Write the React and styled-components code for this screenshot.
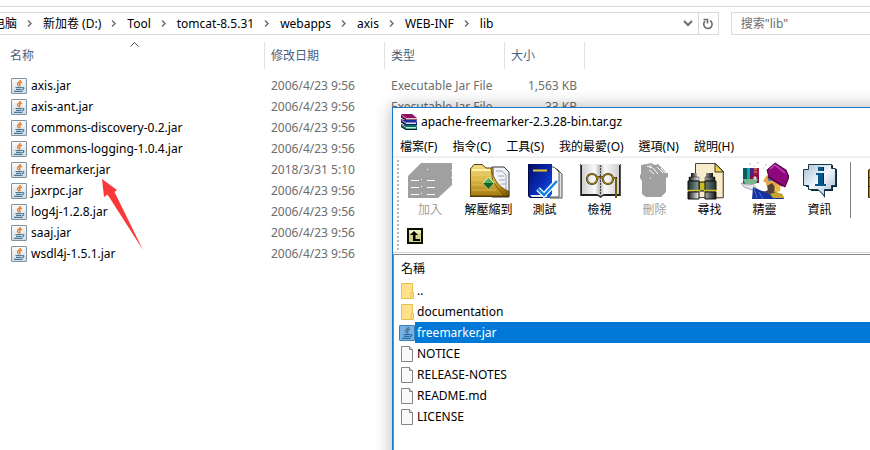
import React from "react";
import styled, { createGlobalStyle } from "styled-components";

const GlobalStyle = createGlobalStyle`
  * { box-sizing: border-box; }
  body {
    margin: 0;
    background: #fff;
    color: #000;
    font: 12px/20px "Noto Sans", "Noto Sans CJK SC", sans-serif;
    overflow: hidden;
  }
  button, input { font: inherit; color: inherit; }
  svg { display: block; flex: none; }
`;

/* ---------- Explorer ---------- */

const Desktop = styled.div`
  position: relative;
  min-height: 100vh;
  overflow: hidden;
`;

const TopStrip = styled.div`
  height: 7px;
  border-bottom: 1px solid #d9d9d9;
`;

const NavRow = styled.div`
  display: flex;
  gap: 12px;
  padding: 5px 0 7px;
`;

const AddressBar = styled.nav`
  flex: 1;
  min-width: 0;
  display: flex;
  height: 23px;
  border: 1px solid #d9d9d9;
  border-left: 0;
`;

const Crumbs = styled.ol`
  flex: 1;
  display: flex;
  margin: 0;
  padding: 0;
  list-style: none;
  overflow: hidden;
`;

const Crumb = styled.li`
  display: flex;
  align-items: center;
  white-space: nowrap;

  &:first-child {
    width: 43px;
    justify-content: flex-end;
  }
`;

const CrumbLink = styled.a`
  color: #000;
  text-decoration: none;
`;

const BarButton = styled.button`
  display: grid;
  place-items: center;
  width: 20px;
  padding: 0;
  border: 0;
  border-left: ${(p) => (p.$divided ? "1px solid #d9d9d9" : "0")};
  background: none;
`;

const SearchBox = styled.input`
  width: 16%;
  height: 23px;
  padding: 0 9px;
  border: 1px solid #d9d9d9;
  border-right: 0;
  border-radius: 0;
  outline: 0;
  &::placeholder { color: #6d6d6d; opacity: 1; }
`;

const FileTable = styled.table`
  border-collapse: collapse;
  table-layout: fixed;
  width: 585px;
`;

const Col = styled.col`
  width: ${(p) => p.$w}px;
`;

const HeadCell = styled.th`
  position: relative;
  padding: 0 0 6px;
  font-weight: 400;
  text-align: left;
  color: #4c607a;
`;

const HeadLabel = styled.div`
  height: 27px;
  line-height: 27px;
  padding-left: ${(p) => (p.$first ? 10 : 6)}px;
  border-right: 1px solid #e2e2e2;
`;

const SortMark = styled.svg`
  position: absolute;
  top: 0;
  left: 49%;
`;

const Cell = styled.td`
  height: 21px;
  padding: 0 8px 0 6px;
  color: #6d6d6d;
  text-align: ${(p) => (p.$right ? "right" : "left")};
  white-space: nowrap;
`;

const NameCell = styled(Cell)`
  padding: 0 0 0 11px;
  color: #000;
`;

const NameBox = styled.div`
  display: flex;
  align-items: center;
  gap: 4px;
`;

const PointerArrow = styled.svg`
  position: absolute;
  left: 100px;
  top: 178px;
`;

/* ---------- Archive window ---------- */

const ArchiveWindow = styled.section`
  position: absolute;
  left: 392px;
  top: 107px;
  right: 0;
  bottom: 0;
  display: flex;
  flex-direction: column;
  overflow: hidden;
  background: #fff;
  border: solid #1979ca;
  border-width: 1px 0 0 1px;
  font-family: "Noto Sans", "Noto Sans CJK TC", sans-serif;
`;

const WindowShadow = styled.div`
  position: absolute;
  left: 392px;
  top: 107px;
  right: -20px;
  bottom: -20px;
  box-shadow: 0 0 16px rgba(0, 0, 0, 0.3);
`;

const TitleBar = styled.header`
  display: flex;
  align-items: center;
  gap: 4px;
  height: 28px;
  padding-left: 8px;
`;

const MenuBar = styled.div`
  display: flex;
  align-items: flex-end;
  gap: 15px;
  height: 22px;
  padding-left: 7px;
  border-bottom: 2px solid #f0f0f0;
`;

const MenuItem = styled.button`
  padding: 0;
  border: 0;
  background: none;
  line-height: 18px;
  white-space: nowrap;
`;

const ToolArea = styled.div`
  display: flex;
  height: 95px;
  padding: 2px 0 0 4px;
  border-bottom: 1px solid #d4d4d4;
`;

const Grip = styled.div`
  width: 2px;
  background: repeating-linear-gradient(#b8b8b8 0 2px, #fff 2px 4px);
`;

const ToolRows = styled.div`
  flex: 1;
  min-width: 0;
`;

const ToolRow = styled.div`
  display: flex;
  height: 66px;
  padding-left: 1px;
`;

const ToolButton = styled.button`
  flex: none;
  display: flex;
  flex-direction: column;
  align-items: ${(p) => (p.$start ? "flex-start" : "center")};
  width: ${(p) => p.$w || 55}px;
  padding: 2px 0 0;
  border: 0;
  background: none;
  line-height: 20px;
  white-space: nowrap;
  color: ${(p) => (p.disabled ? "#a0a0a0" : "#000")};
`;

const ToolDivider = styled.div`
  flex: none;
  width: 1px;
  height: 56px;
  margin: 2px 17px 0 3px;
  background: #808080;
`;

const UpButton = styled.button`
  display: block;
  margin-left: 8px;
  padding: 2px 0 0;
  border: 0;
  background: none;
`;

const Listing = styled.div`
  flex: 1;
  margin-top: 1px;
  padding-top: 3px;
  border: solid #828790;
  border-width: 1px 0 0 1px;
`;

const ArchiveTable = styled.table`
  width: 100%;
  border-collapse: collapse;
`;

const ArchiveHead = styled.th`
  height: 22px;
  padding: 0 0 0 7px;
  font-weight: 400;
  text-align: left;
`;

const ArchiveCell = styled.td`
  height: 21px;
  padding: 0 0 0 5px;
`;

const Entry = styled.div`
  display: flex;
  align-items: center;
`;

const EntryIcon = styled.span`
  display: flex;
  justify-content: center;
  width: 16px;
`;

const EntryName = styled.span`
  flex: 1;
  height: 21px;
  line-height: 21px;
  padding-left: 2px;
  color: ${(p) => (p.$selected ? "#fff" : "#000")};
  background: ${(p) => (p.$selected ? "#0078d7" : "transparent")};
`;

/* ---------- Small icons ---------- */

const Chevron = () => (
  <svg width="26" height="9" viewBox="0 0 26 9" fill="none" stroke="#6b6b6b" strokeWidth="1.4">
    <path d="M11 1.500l3 3-3 3" />
  </svg>
);

const JarIcon = ({ selected }) => (
  <svg width="16" height="16" viewBox="0 0 16 16">
    <defs>
      <linearGradient id="jarPaper" x2="0" y2="1">
        <stop offset="0" stopColor="#fbfcfd" />
        <stop offset="1" stopColor="#cfdce5" />
      </linearGradient>
    </defs>
    <rect x=".5" y=".5" width="15" height="15" rx=".5" fill={selected ? "#76b1e2" : "url(#jarPaper)"} stroke={selected ? "#397fb8" : "#7f93a2"} />
    <path d="M9.500 2c.3 1.800-3.500 2.500-3 4.300.2.700 1 1 1.300 1.900M11 4.200c-1.900.6-3 1.500-2.200 2.500.5.700.2 1.100-.4 1.700" fill="none" stroke={selected ? "#4a7294" : "#e87a28"} strokeWidth="1.300" />
    <path d="M4.500 9.500h6.500M5 11.300h5.500M3 13.300h8.500M11.300 9.500c2.200-.3 2 1.700-.2 2.300" fill="none" stroke={selected ? "#286ca5" : "#4a7796"} strokeWidth="1.200" />
  </svg>
);

const FolderIcon = () => (
  <svg width="13" height="16" viewBox="0 0 13 16">
    <path d="M.5.500h11v9h1v6H.500z" fill="#ffe28b" stroke="#e8bf4c" />
    <path d="M10 15V9.500h1.500" fill="none" stroke="#e8bf4c" />
  </svg>
);

const PageIcon = () => (
  <svg width="12" height="16" viewBox="0 0 12 16">
    <path d="M.5.500h8l3 3v12H.500z" fill="#f7f9fa" stroke="#858585" />
    <path d="M8.500.500v3h3" fill="#ddd" stroke="#858585" />
  </svg>
);

const RarIcon = () => (
  <svg width="16" height="16" viewBox="0 0 16 16">
    <path d="M0 1l1-1h10l5 4v2H5L0 3z" fill="#8f1260" />
    <path d="M5 4h11v2H5z" fill="#e8c9da" />
    <path d="M0 3l5 3h11" fill="none" stroke="#2a0014" />
    <path d="M0 5l4 1h11l1 2v3H5L0 8z" fill="#1b2c9e" />
    <path d="M5 8.500h10v1.500H5z" fill="#d4dcf6" />
    <path d="M0 8l5 3h11" fill="none" stroke="#050a30" />
    <path d="M0 10l4 1h11l1 2v3H5l-5-3z" fill="#0a6f62" />
    <path d="M5 13h10v1.500H5z" fill="#b7efe2" />
    <path d="M0 12.500l5 3h11" fill="none" stroke="#02251f" />
    <path d="M1 1.500l4 2.500M1 6.500L5 9M1 11l4 2.500" stroke="#e58aa8" />
  </svg>
);

/* ---------- Toolbar icons ---------- */

const ToolSvg = ({ children }) => (
  <svg width="48" height="38" viewBox="0 0 48 38">{children}</svg>
);

const AddIcon = () => (
  <ToolSvg>
    <path d="M2 14L15 1h31v22L32 36H2z" fill="#a0a0a0" />
    <path d="M5 18.500h8m8 0h8M5 25.500h8m8 0h8M5 32.500h8m8 0h8M15 17.500h1M15 24.500h1M15 31.500h1M21 7.500h1M45 8.500h1M45 15.500h1" stroke="#fff" />
  </ToolSvg>
);

const ExtractIcon = () => (
  <ToolSvg>
    <defs>
      <linearGradient id="gold" x2="0" y2="1">
        <stop offset="0" stopColor="#f4df83" />
        <stop offset=".5" stopColor="#d9b442" />
        <stop offset="1" stopColor="#a47a12" />
      </linearGradient>
      <linearGradient id="goldFold" x2="1" y2="1">
        <stop offset="0" stopColor="#fff0a0" />
        <stop offset=".5" stopColor="#c5941c" />
        <stop offset="1" stopColor="#6f4c04" />
      </linearGradient>
    </defs>
    <path d="M27 5h12l5 5v25H27z" fill="#f1f3f8" stroke="#30343c" />
    <path d="M31 9h6l4 4v20M33 14h6M34 18h6M36 22h5" fill="none" stroke="#9ba3b4" />
    <path d="M5.500 7L9 2.500h8L21 6h7v8l11 20H5.500z" fill="url(#gold)" stroke="#5b4206" />
    <path d="M7 8h20" stroke="#fff2ab" strokeWidth="2" />
    <path d="M7 13h19M7 18h12M7 23h11M7 28h24" stroke="#f3dc84" strokeOpacity=".5" />
    <path d="M26 6.500c2 10 7 18 18 23v4.500h-5L28 20z" fill="url(#goldFold)" stroke="#5b4206" strokeWidth=".7" />
    <path d="M5 34.500h39" stroke="#4f3702" />
    <path d="M23.500 15l5.500 6-5.500 6-5.500-6z" fill="#4fae60" stroke="#fff4c0" />
    <path d="M18 21h11l-5.500 6z" fill="#116327" />
  </ToolSvg>
);

const TestIcon = () => (
  <ToolSvg>
    <defs>
      <linearGradient id="bookBlue" x2="1" y2="1">
        <stop offset="0" stopColor="#000c60" />
        <stop offset=".6" stopColor="#0b2fbd" />
        <stop offset="1" stopColor="#0666e8" />
      </linearGradient>
    </defs>
    <path d="M29 7h7l5 5v24H29z" fill="#dfe3e8" stroke="#555" />
    <path d="M27 5h6l5 5v25H27z" fill="#fff" stroke="#555" />
    <path d="M7 2h24v30l-3 4H9l-2-2z" fill="url(#bookBlue)" />
    <path d="M7.500 2v32l2 1.500H24" fill="none" stroke="#000748" />
    <path d="M9 33h17v2H11z" fill="#e8edf5" />
    <path d="M12 8.500h14" stroke="#e3c62c" strokeWidth="2" />
    <path d="M17 27l6 6 13-14" fill="none" stroke="#fff" strokeWidth="5" />
    <path d="M17 27l6 6 13-14" fill="none" stroke="#1287e3" strokeWidth="2.500" />
  </ToolSvg>
);

const ViewIcon = () => (
  <ToolSvg>
    <defs>
      <linearGradient id="leaf">
        <stop offset="0" stopColor="#d0d0d0" />
        <stop offset=".35" stopColor="#f9f9f9" />
        <stop offset=".5" stopColor="#b4b4b4" />
        <stop offset=".6" stopColor="#fafafa" />
        <stop offset="1" stopColor="#cfcfcf" />
      </linearGradient>
    </defs>
    <path d="M4 3h41v31H27l-2.500 2L22 34H4z" fill="#222" />
    <path d="M6 2h16l2.500 2L27 2h16v30H28l-3.500 2-3.500-2H6z" fill="url(#leaf)" />
    <path d="M4.500 2v32M44.500 2v32" stroke="#555" />
    <path d="M24.500 3v30" stroke="#444" strokeDasharray="2 1" />
    <g fill="none" stroke="#221900" strokeWidth="2">
      <circle cx="16" cy="17" r="5" />
      <circle cx="32" cy="17" r="5" />
      <path d="M21 16q3.500-2 6 0M37 16h3v20" />
    </g>
    <g fill="none" stroke="#c59b1d">
      <circle cx="16" cy="17" r="5" />
      <circle cx="32" cy="17" r="5" />
      <path d="M21 16q3.500-2 6 0M37 16h3v20" />
    </g>
  </ToolSvg>
);

const DeleteIcon = () => (
  <ToolSvg>
    <path d="M10 3l6-1 4-1 4 2 3-1 6 6 2 3h2v4l-2 1v14l-5 5H15l-4-3V19l-2-3v-3l1-1z" fill="#a0a0a0" />
    <path d="M16 4l5 2-2-3M22 6l5 6M26 5l6 6M30 6l4 5M18 8l5 4M19 16h1" fill="none" stroke="#fff" />
  </ToolSvg>
);

const FindIcon = () => (
  <ToolSvg>
    <defs>
      <linearGradient id="tube">
        <stop offset="0" stopColor="#1c2a28" />
        <stop offset=".4" stopColor="#86a39d" />
        <stop offset="1" stopColor="#22332f" />
      </linearGradient>
      <linearGradient id="steel">
        <stop offset="0" stopColor="#111" />
        <stop offset=".4" stopColor="#fff" />
        <stop offset="1" stopColor="#111" />
      </linearGradient>
    </defs>
    <path d="M9.500 1.500h20l8 8v26h-28z" fill="#f9ecca" stroke="#444" />
    <path d="M29 1.500l8.500 8.500H29z" fill="#f5d53f" stroke="#333" />
    <path d="M37 11v25H29" fill="none" stroke="#8f8567" />
    <path d="M13 20h7v9h-7z" fill="#cdbb25" stroke="#111" />
    <path d="M5 11h6v4H5zM20 11h7v4h-7z" fill="url(#steel)" />
    <path d="M3 15h10v4H3zM19 15h10v4H19z" fill="url(#steel)" stroke="#222" strokeWidth=".5" />
    <path d="M2 19h11v10H2zM19 19h11v10H19z" fill="url(#tube)" stroke="#111" />
    <path d="M1 28.500h13M18 28.500h13" stroke="#d3c426" strokeWidth="1.500" />
    <path d="M2 30h11v7H2zM19 30h11v7H19z" fill="url(#steel)" stroke="#111" />
  </ToolSvg>
);

const WizardIcon = () => (
  <ToolSvg>
    <path d="M2 6h4v16H2z" fill="#075c60" />
    <path d="M6 6h3v16H6z" fill="#12ad9a" />
    <path d="M9 6h4v12H9z" fill="#43218c" />
    <path d="M12 6h6v7h-6z" fill="#a50f4b" />
    <path d="M9 13h9v8H9z" fill="#7c1240" />
    <path d="M2 17h15l-2 5H4z" fill="#79b78d" />
    <path d="M14 14v4m-2-2h4" stroke="#fff" />
    <path d="M13 7h3M13 10h3" stroke="#d9b744" />
    <path d="M8 2h2M16 1h2M24 3h2M13 4h1M22 6h1" stroke="#bbb" />
    <path d="M0 21l7 2 5-1 4 5-5 1-8-3z" fill="#e6e6ed" stroke="#81818d" strokeWidth=".7" />
    <path d="M12 25l9 4 8 1 12 2 2 5H11z" fill="#16339d" />
    <path d="M13 26l3 10M18 30l4 7" stroke="#466be0" />
    <path d="M26 13l14 6-1 10-8 2-5-3 2-3-3-2v-2l-3-2z" fill="#e5a54a" />
    <path d="M26 24l5-3 3 4-1 5 7 2-9 1-8-3 4-2z" fill="#53443b" />
    <path d="M29 32l7-2 6 3 1 3H32z" fill="#c4a42c" />
    <path d="M26 8l8-7 11 7 3 7-4 10-16-10z" fill="#8c087c" stroke="#45003e" />
    <path d="M29 7l5-4 10 8" fill="none" stroke="#c840b4" strokeWidth="1.500" />
    <path d="M27 15l15 9" stroke="#58004e" strokeWidth="2" />
    <circle cx="36" cy="26" r="2" fill="none" stroke="#f0d434" />
    <path d="M27 18h3" stroke="#1f6fc4" strokeWidth="1.500" />
  </ToolSvg>
);

const InfoIcon = () => (
  <ToolSvg>
    <defs>
      <linearGradient id="bubble" x2="1" y2="1">
        <stop offset="0" stopColor="#a9bfd1" />
        <stop offset=".5" stopColor="#f3f8fc" />
        <stop offset="1" stopColor="#9cb4c7" />
      </linearGradient>
    </defs>
    <path d="M14 3h23v4h4v18h-4v4h-8v7l-5-7h-9v-4h-5v-16h4z" fill="#0d2737" />
    <path d="M12.500 2.500h23v4h4v17h-4v4h-7V34l-6.500-6.500h-9.500v-4h-5v-16h5z" fill="url(#bubble)" stroke="#183b51" />
    <path d="M22 5h5v4h-5zM20 11h7v11h3v2H19v-2h3v-9h-2z" fill="#07578e" />
    <path d="M27.500 5v4M27.500 11v11" stroke="#00284b" />
  </ToolSvg>
);

const ArchiveBoxIcon = () => (
  <svg width="40" height="38" viewBox="0 0 40 38">
    <path d="M.5 8L3 6.500h36v29H.500z" fill="#9d8428" stroke="#3b2b04" />
    <path d="M0 15.500h38M0 24.500h38" stroke="#3b2b04" />
  </svg>
);

const UpIcon = () => (
  <svg width="16" height="16" viewBox="0 0 16 16">
    <rect x="1" y="1" width="14" height="14" fill="#d4cf8b" stroke="#0b0b00" strokeWidth="2" />
    <path d="M2 2h12v3H2z" fill="#eeebc0" />
    <path d="M7 3l4 4H8.500v4H13v2H6V7H3z" fill="#000" />
  </svg>
);

/* ---------- Data ---------- */

const crumbs = ["电脑", "新加卷 (D:)", "Tool", "tomcat-8.5.31", "webapps", "axis", "WEB-INF", "lib"];

const files = [
  ["axis.jar", "2006/4/23 9:56", "Executable Jar File", "1,563 KB"],
  ["axis-ant.jar", "2006/4/23 9:56", "Executable Jar File", "33 KB"],
  ["commons-discovery-0.2.jar", "2006/4/23 9:56"],
  ["commons-logging-1.0.4.jar", "2006/4/23 9:56"],
  ["freemarker.jar", "2018/3/31 5:10"],
  ["jaxrpc.jar", "2006/4/23 9:56"],
  ["log4j-1.2.8.jar", "2006/4/23 9:56"],
  ["saaj.jar", "2006/4/23 9:56"],
  ["wsdl4j-1.5.1.jar", "2006/4/23 9:56"],
];

const menus = ["檔案(F)", "指令(C)", "工具(S)", "我的最愛(O)", "選項(N)", "說明(H)"];

const tools = [
  { label: "加入", Icon: AddIcon, width: 60, disabled: true },
  { label: "解壓縮到", Icon: ExtractIcon, width: 57 },
  { label: "測試", Icon: TestIcon },
  { label: "檢視", Icon: ViewIcon },
  { label: "刪除", Icon: DeleteIcon, disabled: true },
  { label: "尋找", Icon: FindIcon },
  { label: "精靈", Icon: WizardIcon },
  { label: "資訊", Icon: InfoIcon },
];

const entries = [
  { name: "..", Icon: FolderIcon },
  { name: "documentation", Icon: FolderIcon },
  { name: "freemarker.jar", Icon: JarIcon, selected: true },
  { name: "NOTICE", Icon: PageIcon },
  { name: "RELEASE-NOTES", Icon: PageIcon },
  { name: "README.md", Icon: PageIcon },
  { name: "LICENSE", Icon: PageIcon },
];

function Explorer() {
  return (
    <main>
      <TopStrip />
      <NavRow>
        <AddressBar>
          <Crumbs>
            {crumbs.map((name, i) => (
              <Crumb key={name}>
                <CrumbLink href="#">{name}</CrumbLink>
                {i < crumbs.length - 1 && <Chevron />}
              </Crumb>
            ))}
          </Crumbs>
          <BarButton aria-label="History">
            <svg width="10" height="7" viewBox="0 0 10 7" fill="none" stroke="#6b6b6b" strokeWidth="2">
              <path d="M1 1l4 4 4-4" />
            </svg>
          </BarButton>
          <BarButton $divided aria-label="Refresh">
            <svg width="12" height="12" viewBox="0 0 12 12" fill="none" stroke="#6b6b6b" strokeWidth="1.600">
              <path d="M8 2.600a4.200 4.200 0 1 1-5 .6M1.500 1.500h4v4" />
            </svg>
          </BarButton>
        </AddressBar>
        <SearchBox type="text" aria-label="搜索" placeholder={'搜索"lib"'} />
      </NavRow>
      <FileTable>
        <colgroup>
          <Col $w={265} />
          <Col $w={120} />
          <Col $w={120} />
          <Col $w={80} />
        </colgroup>
        <thead>
          <tr>
            {["名称", "修改日期", "类型", "大小"].map((h, i) => (
              <HeadCell key={h} scope="col">
                <HeadLabel $first={i === 0}>{h}</HeadLabel>
                {i === 0 && (
                  <SortMark width="9" height="5" viewBox="0 0 9 5" fill="none" stroke="#555">
                    <path d="M.5 4.500l4-4 4 4" />
                  </SortMark>
                )}
              </HeadCell>
            ))}
          </tr>
        </thead>
        <tbody>
          {files.map(([name, date, type, size]) => (
            <tr key={name}>
              <NameCell>
                <NameBox>
                  <JarIcon />
                  {name}
                </NameBox>
              </NameCell>
              <Cell>{date}</Cell>
              <Cell>{type}</Cell>
              <Cell $right>{size}</Cell>
            </tr>
          ))}
        </tbody>
      </FileTable>
    </main>
  );
}

function Archive() {
  return (
    <ArchiveWindow>
      <TitleBar>
        <RarIcon />
        apache-freemarker-2.3.28-bin.tar.gz
      </TitleBar>
      <MenuBar>
        {menus.map((m) => (
          <MenuItem key={m}>{m}</MenuItem>
        ))}
      </MenuBar>
      <ToolArea>
        <Grip />
        <ToolRows>
          <ToolRow>
            {tools.map(({ label, Icon, width, disabled }) => (
              <ToolButton key={label} $w={width} disabled={disabled}>
                <Icon />
                {label}
              </ToolButton>
            ))}
            <ToolDivider />
            <ToolButton $start aria-label="Archive">
              <ArchiveBoxIcon />
            </ToolButton>
          </ToolRow>
          <UpButton aria-label="Up">
            <UpIcon />
          </UpButton>
        </ToolRows>
      </ToolArea>
      <Listing>
        <ArchiveTable>
          <thead>
            <tr>
              <ArchiveHead scope="col">名稱</ArchiveHead>
            </tr>
          </thead>
          <tbody>
            {entries.map(({ name, Icon, selected }) => (
              <tr key={name}>
                <ArchiveCell>
                  <Entry>
                    <EntryIcon>
                      <Icon selected={selected} />
                    </EntryIcon>
                    <EntryName $selected={selected}>{name}</EntryName>
                  </Entry>
                </ArchiveCell>
              </tr>
            ))}
          </tbody>
        </ArchiveTable>
      </Listing>
    </ArchiveWindow>
  );
}

export default function App() {
  return (
    <Desktop>
      <GlobalStyle />
      <Explorer />
      <PointerArrow width="44" height="74" viewBox="0 0 44 74">
        <path d="M2 1l15 11-2.500 2L43 72 7.500 16.500 4 19z" fill="#fb3838" />
      </PointerArrow>
      <WindowShadow />
      <Archive />
    </Desktop>
  );
}
